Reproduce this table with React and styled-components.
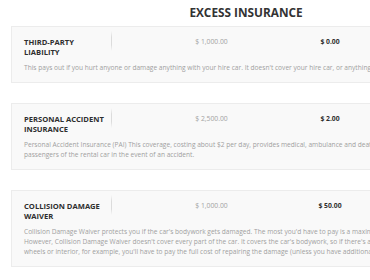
import React from "react";
import styled, { createGlobalStyle } from "styled-components";

const GlobalStyle = createGlobalStyle`
    html, body {
        margin: 0;
        padding: 0;
        background: #ffffff;
        overflow: hidden;
    }
    body {
        font-family: "Open Sans", "Liberation Sans", Arial, sans-serif;
    }
`;

const Page = styled.div`
    width: 470px;
    padding: 4px 0 0 11px;
`;

const Heading = styled.h2`
    margin: 0 0 6px;
    font-size: 11.8px;
    line-height: 16px;
    font-weight: 700;
    color: #333333;
    text-align: center;
`;

const CardList = styled.div`
    display: flex;
    flex-direction: column;
    gap: 20px;
`;

const Card = styled.div`
    background: #f9f9f9;
    border: 1px solid #ececec;
    padding: 10px 12px 9px;
`;

const Row = styled.div`
    display: grid;
    grid-template-columns: 88px 199px 38px;
    align-items: start;
`;

const Title = styled.div`
    position: relative;
    padding-right: 4px;
    font-size: 7.6px;
    line-height: 10px;
    font-weight: 700;
    text-transform: uppercase;
    color: #2e2e2e;

    &::after {
        content: "";
        position: absolute;
        right: 0;
        top: -6px;
        width: 1px;
        height: 20px;
        background: linear-gradient(to bottom, rgba(220, 220, 220, 0), #dcdcdc 30%, #dcdcdc 70%, rgba(220, 220, 220, 0));
    }
`;

const Price = styled.div`
    font-size: 6.8px;
    line-height: 10px;
    text-align: center;
    white-space: nowrap;
    font-weight: ${(p) => (p.$strong ? 700 : 400)};
    color: ${(p) => (p.$strong ? "#2e2e2e" : "#a3a3a3")};
`;

const Description = styled.p`
    margin: 6px 0 0;
    font-size: 6.6px;
    line-height: 10px;
    color: #9f9f9f;
    white-space: pre;
`;

const items = [
    {
        title: "Third-Party Liability",
        excess: "$ 1,000.00",
        price: "$ 0.00",
        text: "This pays out if you hurt anyone or damage anything with your hire car. It doesn't cover your hire car, or anything in it.",
    },
    {
        title: "Personal Accident Insurance",
        excess: "$ 2,500.00",
        price: "$ 2.00",
        text: "Personal Accident Insurance (PAI) This coverage, costing about $2 per day, provides medical, ambulance and death benefits for the driver and\npassengers of the rental car in the event of an accident.",
    },
    {
        title: "Collision Damage Waiver",
        excess: "$ 1,000.00",
        price: "$ 50.00",
        text: "Collision Damage Waiver protects you if the car's bodywork gets damaged. The most you'd have to pay is a maximum excess amount.\nHowever, Collision Damage Waiver doesn't cover every part of the car. It covers the car's bodywork, so if there's any damage to the\nwheels or interior, for example, you'll have to pay the full cost of repairing the damage (unless you have additional cover).",
    },
];

const App = () => {
    return (
        <Page>
            <GlobalStyle />
            <Heading>EXCESS INSURANCE</Heading>
            <CardList>
                {items.map((item) => (
                    <Card key={item.title}>
                        <Row>
                            <Title>{item.title}</Title>
                            <Price>{item.excess}</Price>
                            <Price $strong>{item.price}</Price>
                        </Row>
                        <Description>{item.text}</Description>
                    </Card>
                ))}
            </CardList>
        </Page>
    );
};

export default App;
